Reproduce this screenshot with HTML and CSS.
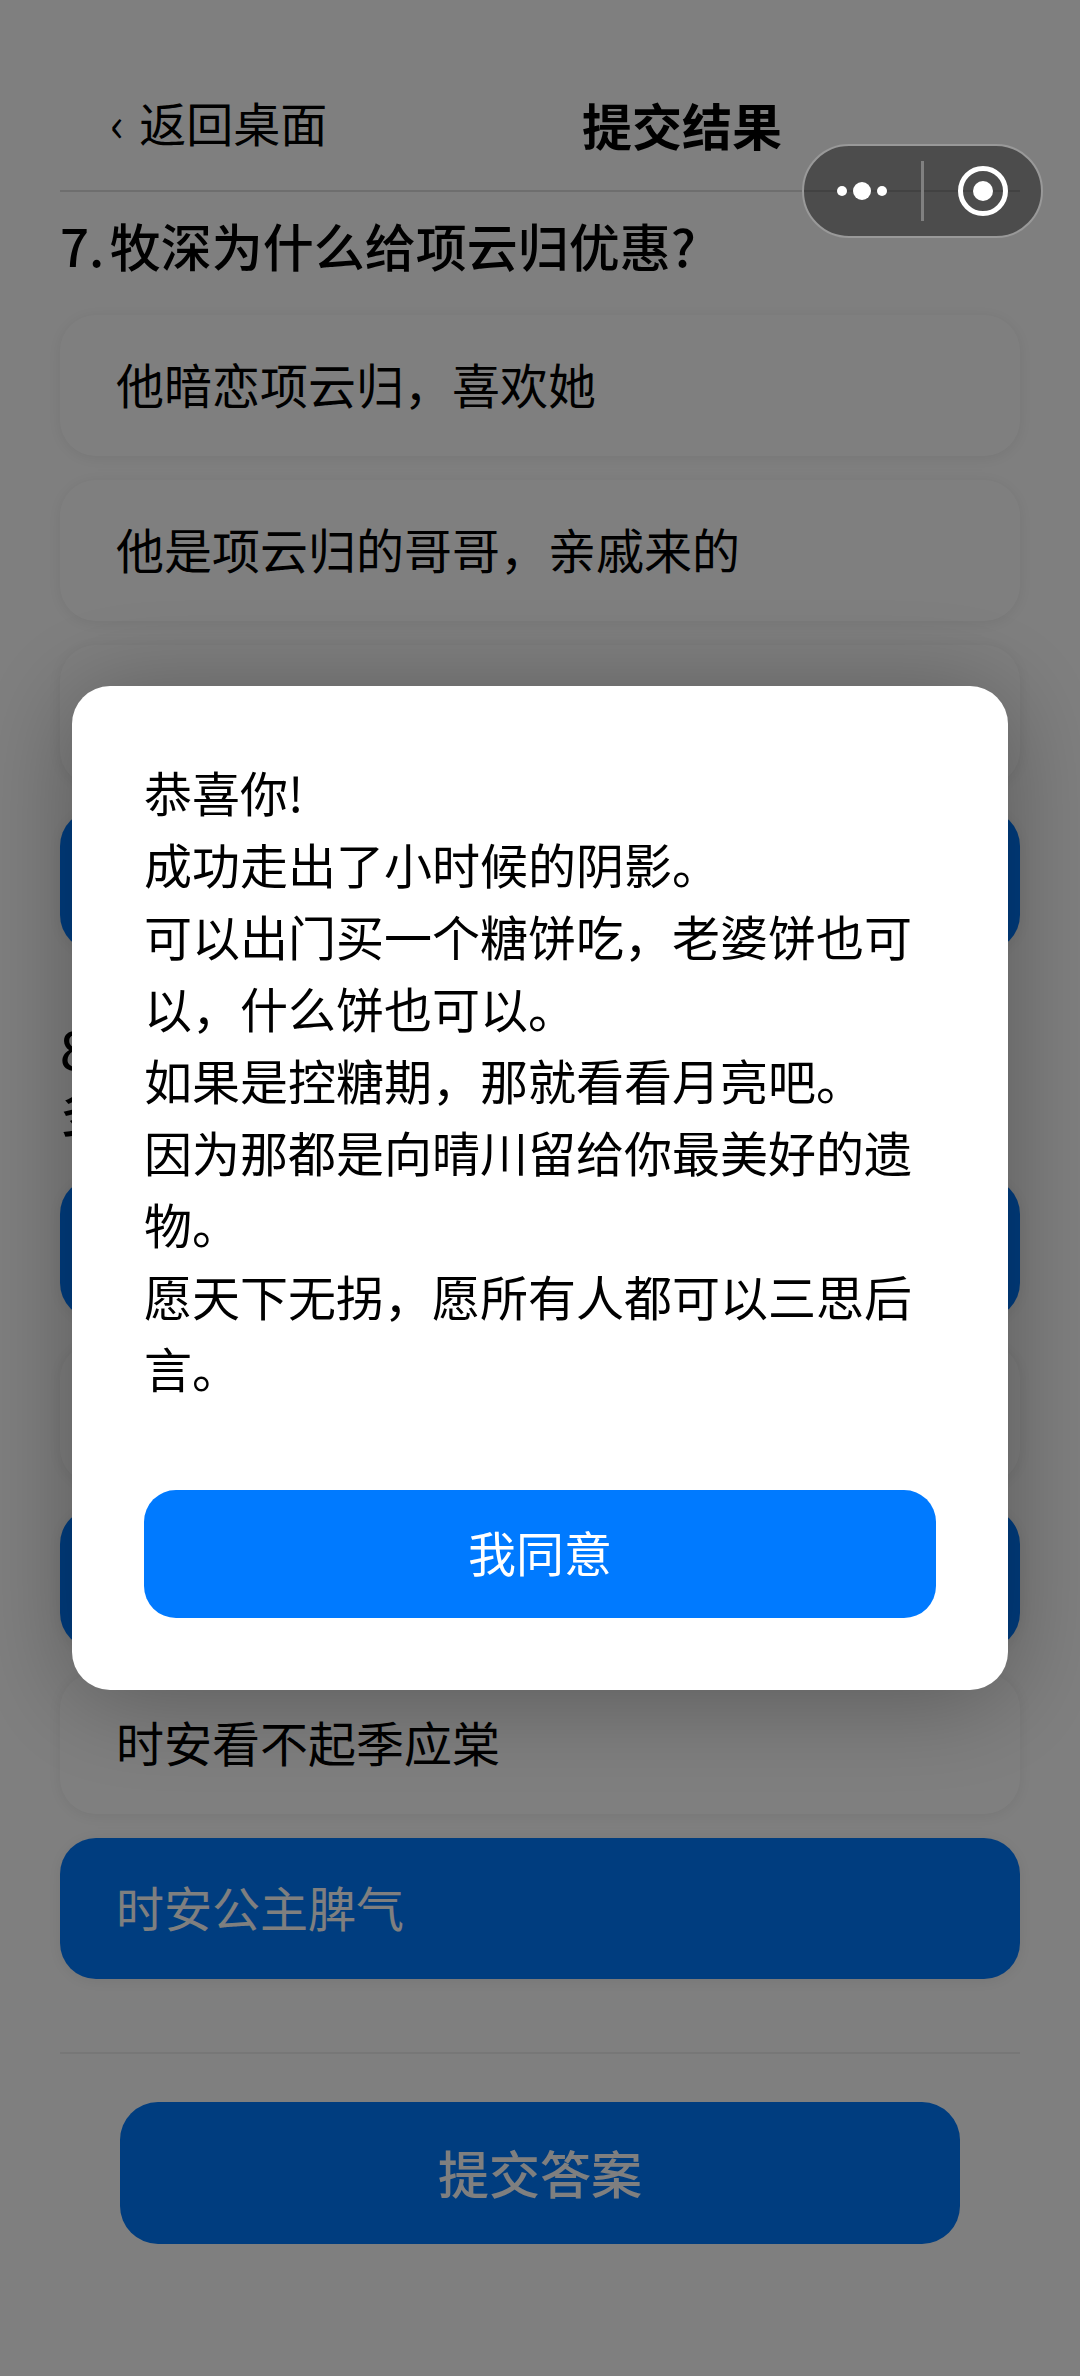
FILE: index.html
```html
<!DOCTYPE html>
<html lang="zh-CN">
<head>
    <meta charset="utf-8">
    <title>提交结果</title>
    <link rel="stylesheet" href="styles.css">
</head>
<body>
    <div class="page">
        <header class="nav">
            <div class="nav-back"><span class="nav-arrow">‹</span>返回桌面</div>
            <h1 class="nav-title">提交结果</h1>
        </header>

        <section class="question">
            <h2 class="question-title">7. 牧深为什么给项云归优惠?</h2>
            <div class="option">他暗恋项云归，喜欢她</div>
            <div class="option">他是项云归的哥哥，亲戚来的</div>
            <div class="option"></div>
            <div class="option selected"></div>
        </section>

        <section class="question">
            <h2 class="question-title">8.<br>多</h2>
            <div class="option selected"></div>
            <div class="option"></div>
            <div class="option selected"></div>
            <div class="option">时安看不起季应棠</div>
            <div class="option selected">时安公主脾气</div>
        </section>

        <div class="footer">
            <button class="submit-btn">提交答案</button>
        </div>
    </div>

    <!-- dialog layer -->
    <div class="overlay">
        <div class="dialog">
            <p class="dialog-text">恭喜你!<br>成功走出了小时候的阴影。<br>可以出门买一个糖饼吃，老婆饼也可以，什么饼也可以。<br>如果是控糖期，那就看看月亮吧。<br>因为那都是向晴川留给你最美好的遗物。<br>愿天下无拐，愿所有人都可以三思后言。</p>
            <button class="dialog-btn">我同意</button>
        </div>
    </div>

    <!-- mini program capsule -->
    <div class="capsule">
        <div class="capsule-part">
            <svg width="60" height="24" viewBox="0 0 60 24">
                <circle cx="9" cy="12" r="5" fill="#fff"/>
                <circle cx="29" cy="12" r="9" fill="#fff"/>
                <circle cx="49" cy="12" r="5" fill="#fff"/>
            </svg>
        </div>
        <div class="capsule-line"></div>
        <div class="capsule-part">
            <svg width="52" height="52" viewBox="0 0 52 52">
                <circle cx="26" cy="26" r="22.5" fill="none" stroke="#fff" stroke-width="5"/>
                <circle cx="26" cy="26" r="10" fill="#fff"/>
            </svg>
        </div>
    </div>
</body>
</html>
```

FILE: styles.css
```css
* {
    box-sizing: border-box;
}

body {
    margin: 0;
    background: #fff;
    color: #000;
    font-family: "Noto Sans CJK SC", "Noto Sans", sans-serif;
}

.page {
    height: 2376px;
    padding: 0 60px;
    overflow: hidden;
}

.nav {
    display: flex;
    align-items: center;
    height: 192px;
    padding: 56px 0 0 50px;
    border-bottom: 2px solid #ddd;
}

.nav-back {
    width: 472px;
    padding-bottom: 4px;
    font-size: 47px;
}

.nav-arrow {
    margin-right: 15px;
}

.nav-title {
    margin: 0;
    padding-top: 2px;
    font-size: 50px;
    font-weight: 700;
}

.question {
    margin-bottom: 66px;
}

.question-title {
    margin: 0 0 37px;
    font-size: 51px;
    font-weight: 500;
    line-height: 62px;
    word-spacing: -6px;
}

.nav + .question .question-title {
    margin: 22px 0 39px;
}

.option {
    display: flex;
    align-items: center;
    height: 141px;
    margin-bottom: 24px;
    padding: 0 56px 6px;
    border-radius: 36px;
    background: #fff;
    box-shadow: 0 2px 16px rgba(0,0,0,0.08);
    font-size: 48px;
}

.option:last-child {
    margin-bottom: 0;
}

.option.selected {
    background: #007aff;
    color: #fff;
}

.footer {
    margin-top: 73px;
    padding: 48px 60px 0;
    border-top: 2px solid #eee;
}

.submit-btn {
    display: block;
    width: 100%;
    height: 142px;
    padding: 0 0 3px;
    border: 0;
    border-radius: 38px;
    background: #007aff;
    color: #fff;
    font-family: inherit;
    font-size: 51px;
    font-weight: 500;
}

.overlay {
    position: fixed;
    top: 0;
    left: 0;
    right: 0;
    bottom: 0;
    display: flex;
    align-items: center;
    justify-content: center;
    background: rgba(0,0,0,0.5);
}

.dialog {
    width: 936px;
    padding: 69px 72px 72px;
    border-radius: 38px;
    background: #fff;
    box-shadow: 0 8px 100px rgba(0,0,0,0.3);
}

.dialog-text {
    margin: 0 0 87px;
    font-size: 48px;
    line-height: 72px;
}

.dialog-btn {
    display: block;
    width: 100%;
    height: 128px;
    padding: 0 0 6px;
    border: 0;
    border-radius: 32px;
    background: #007aff;
    color: #fff;
    font-family: inherit;
    font-size: 48px;
}

.capsule {
    position: fixed;
    top: 144px;
    left: 802px;
    width: 241px;
    height: 94px;
    display: flex;
    align-items: center;
    border: 2px solid #999;
    border-radius: 47px;
    background: rgba(0,0,0,0.4);
}

.capsule-part {
    flex: 1;
    display: flex;
    justify-content: center;
}

.capsule-line {
    width: 3px;
    height: 60px;
    background: #808080;
}
```
